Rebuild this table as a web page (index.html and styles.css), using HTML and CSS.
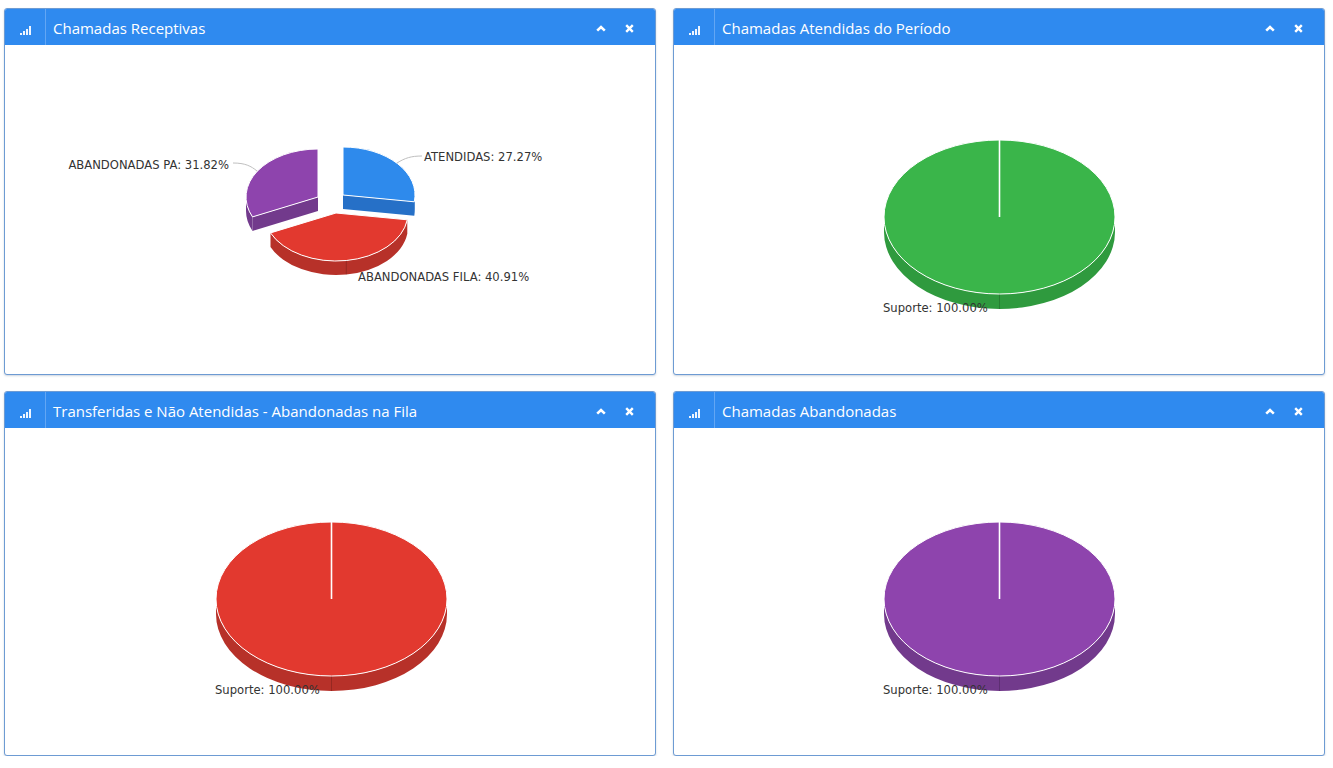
FILE: index.html
```html
<!DOCTYPE html>
<html lang="pt-BR">
<head>
<meta charset="utf-8">
<title>Dashboard de Chamadas</title>
<link rel="stylesheet" href="styles.css">
</head>
<body>
<div class="dash">

  <section class="panel">
    <header class="panel-head">
      <span class="head-icon"><svg width="12" height="9" viewBox="0 0 12 9"><rect x="0" y="7" width="2" height="2"/><rect x="3" y="5" width="2" height="4"/><rect x="6" y="3" width="2" height="6"/><rect x="9" y="0" width="2" height="9"/></svg></span>
      <h2 class="head-title">Chamadas Receptivas</h2>
      <div class="head-tools">
        <button class="tool" type="button"><svg width="10" height="7" viewBox="0 0 10 7"><polyline points="1.2,5.6 5,2 8.8,5.6"/></svg></button>
        <button class="tool" type="button"><svg width="9" height="9" viewBox="0 0 9 9"><path d="M1.2 1.2 L7.8 7.8 M7.8 1.2 L1.2 7.8"/></svg></button>
      </div>
    </header>
    <div class="panel-body">
      <svg class="chart" width="650" height="329" viewBox="0 0 650 329">
        <!-- purple slice -->
        <path class="purple-side" d="M313 152 L247.5 171.9 L247.5 185.9 L313 166 Z"/>
        <path class="purple-side" d="M247.5 171.9 A72 48 0 0 1 241 152 L241 166 A72 48 0 0 0 247.5 185.9 Z"/>
        <path class="purple-top slice-top" d="M313 152 L247.5 171.9 A72 48 0 0 1 313 104 Z"/>
        <!-- blue slice -->
        <path class="blue-side" d="M338 150 L409.3 156.8 L409.3 170.8 L338 164 Z"/>
        <path class="blue-side" d="M410 150 A72 48 0 0 1 409.3 156.8 L409.3 170.8 A72 48 0 0 0 410 164 Z"/>
        <path class="blue-top slice-top" d="M338 150 L338 102 A72 48 0 0 1 409.3 156.8 Z"/>
        <!-- red slice -->
        <path class="red-side" d="M402.3 174.8 A72 48 0 0 1 265.5 187.9 L265.5 201.9 A72 48 0 0 0 402.3 188.8 Z"/>
        <path class="seam" d="M341.3 215.5 L341.3 229.5"/>
        <path class="red-top slice-top" d="M331 168 L402.3 174.8 A72 48 0 0 1 265.5 187.9 Z"/>
        <!-- connectors -->
        <path class="connector" d="M392 118 C400 113 406 111 417 111"/>
        <path class="connector" d="M252 126 C246 121 240 118 228 118"/>
        <text class="label" x="419" y="116">ATENDIDAS: 27.27%</text>
        <text class="label" x="224" y="124" text-anchor="end">ABANDONADAS PA: 31.82%</text>
        <text class="label" x="353" y="236">ABANDONADAS FILA: 40.91%</text>
      </svg>
    </div>
  </section>

  <section class="panel">
    <header class="panel-head">
      <span class="head-icon"><svg width="12" height="9" viewBox="0 0 12 9"><rect x="0" y="7" width="2" height="2"/><rect x="3" y="5" width="2" height="4"/><rect x="6" y="3" width="2" height="6"/><rect x="9" y="0" width="2" height="9"/></svg></span>
      <h2 class="head-title">Chamadas Atendidas do Período</h2>
      <div class="head-tools">
        <button class="tool" type="button"><svg width="10" height="7" viewBox="0 0 10 7"><polyline points="1.2,5.6 5,2 8.8,5.6"/></svg></button>
        <button class="tool" type="button"><svg width="9" height="9" viewBox="0 0 9 9"><path d="M1.2 1.2 L7.8 7.8 M7.8 1.2 L1.2 7.8"/></svg></button>
      </div>
    </header>
    <div class="panel-body">
      <svg class="chart" width="650" height="329" viewBox="0 0 650 329">
        <path class="green-side" d="M210 172 L210 187 A115.5 77 0 0 0 441 187 L441 172 A115.5 77 0 0 1 210 172 Z"/>
        <path class="seam" d="M325.5 249 L325.5 264"/>
        <ellipse class="green-top slice-top" cx="325.5" cy="172" rx="115.5" ry="77"/>
        <path class="radius" d="M325.5 172 L325.5 95"/>
        <text class="label" x="209" y="267">Suporte: 100.00%</text>
      </svg>
    </div>
  </section>

  <section class="panel">
    <header class="panel-head">
      <span class="head-icon"><svg width="12" height="9" viewBox="0 0 12 9"><rect x="0" y="7" width="2" height="2"/><rect x="3" y="5" width="2" height="4"/><rect x="6" y="3" width="2" height="6"/><rect x="9" y="0" width="2" height="9"/></svg></span>
      <h2 class="head-title">Transferidas e Não Atendidas - Abandonadas na Fila</h2>
      <div class="head-tools">
        <button class="tool" type="button"><svg width="10" height="7" viewBox="0 0 10 7"><polyline points="1.2,5.6 5,2 8.8,5.6"/></svg></button>
        <button class="tool" type="button"><svg width="9" height="9" viewBox="0 0 9 9"><path d="M1.2 1.2 L7.8 7.8 M7.8 1.2 L1.2 7.8"/></svg></button>
      </div>
    </header>
    <div class="panel-body">
      <svg class="chart" width="650" height="328" viewBox="0 0 650 328">
        <path class="red-side" d="M211 171 L211 186 A115.5 77 0 0 0 442 186 L442 171 A115.5 77 0 0 1 211 171 Z"/>
        <path class="seam" d="M326.5 248 L326.5 263"/>
        <ellipse class="red-top slice-top" cx="326.5" cy="171" rx="115.5" ry="77"/>
        <path class="radius" d="M326.5 171 L326.5 94"/>
        <text class="label" x="210" y="266">Suporte: 100.00%</text>
      </svg>
    </div>
  </section>

  <section class="panel">
    <header class="panel-head">
      <span class="head-icon"><svg width="12" height="9" viewBox="0 0 12 9"><rect x="0" y="7" width="2" height="2"/><rect x="3" y="5" width="2" height="4"/><rect x="6" y="3" width="2" height="6"/><rect x="9" y="0" width="2" height="9"/></svg></span>
      <h2 class="head-title">Chamadas Abandonadas</h2>
      <div class="head-tools">
        <button class="tool" type="button"><svg width="10" height="7" viewBox="0 0 10 7"><polyline points="1.2,5.6 5,2 8.8,5.6"/></svg></button>
        <button class="tool" type="button"><svg width="9" height="9" viewBox="0 0 9 9"><path d="M1.2 1.2 L7.8 7.8 M7.8 1.2 L1.2 7.8"/></svg></button>
      </div>
    </header>
    <div class="panel-body">
      <svg class="chart" width="650" height="328" viewBox="0 0 650 328">
        <path class="purple-side" d="M210 171 L210 186 A115.5 77 0 0 0 441 186 L441 171 A115.5 77 0 0 1 210 171 Z"/>
        <path class="seam" d="M325.5 248 L325.5 263"/>
        <ellipse class="purple-top slice-top" cx="325.5" cy="171" rx="115.5" ry="77"/>
        <path class="radius" d="M325.5 171 L325.5 94"/>
        <text class="label" x="209" y="266">Suporte: 100.00%</text>
      </svg>
    </div>
  </section>

</div>
</body>
</html>
```

FILE: styles.css
```css
html, body {
  margin: 0;
  background: #ffffff;
}

body {
  font-family: "Open Sans", "Noto Sans", sans-serif;
}

.dash {
  display: grid;
  grid-template-columns: 652px 652px;
  grid-template-rows: 367px 365px;
  column-gap: 17px;
  row-gap: 16px;
  padding: 8px 0 0 4px;
}

.panel {
  display: flex;
  flex-direction: column;
  border: 1px solid #6d9bd3;
  border-radius: 3px;
  overflow: hidden;
  background: #ffffff;
  box-shadow: 0 1px 2px rgba(60, 90, 130, 0.25);
}

.panel-head {
  flex: 0 0 36px;
  height: 36px;
  display: flex;
  align-items: center;
  background: #2f8aef;
  color: #ffffff;
}

.head-icon {
  width: 40px;
  height: 100%;
  flex: 0 0 40px;
  border-right: 1px solid #62a6f4;
  display: flex;
  align-items: center;
  justify-content: center;
}

.head-icon svg {
  margin-top: 6px;
  margin-left: 2px;
  fill: #eef5ff;
}

.head-title {
  flex: 1;
  margin: 0;
  padding: 2px 0 0 7px;
  font-size: 15px;
  font-weight: 400;
  line-height: 20px;
  white-space: nowrap;
}

.head-tools {
  display: flex;
  padding: 3px 11px 0 0;
}

.tool {
  width: 29px;
  height: 33px;
  padding: 0;
  margin: 0;
  border: 0;
  background: none;
  display: flex;
  align-items: center;
  justify-content: center;
  cursor: pointer;
}

.tool svg {
  stroke: #ffffff;
  fill: none;
  stroke-width: 2.4;
}

.tool polyline {
  stroke-width: 2.6;
}

.panel-body {
  flex: 1;
  overflow: hidden;
}

.chart {
  display: block;
}

.slice-top {
  stroke: #ffffff;
  stroke-width: 1;
  stroke-linejoin: round;
}

.blue-top { fill: #2e8aec; }
.blue-side { fill: #2670c7; }
.red-top { fill: #e2392f; }
.red-side { fill: #b73129; }
.purple-top { fill: #8e44ad; }
.purple-side { fill: #723a8c; }
.green-top { fill: #3ab54a; }
.green-side { fill: #2f9a3e; }

.radius {
  stroke: #ffffff;
  stroke-width: 1.6;
  fill: none;
}

.seam {
  stroke: rgba(0, 0, 0, 0.18);
  stroke-width: 1;
  fill: none;
}

.connector {
  stroke: #bfbfbf;
  stroke-width: 1;
  fill: none;
}

.label {
  font-family: "DejaVu Sans", Verdana, sans-serif;
  font-size: 11.6px;
  fill: #333333;
}
```
